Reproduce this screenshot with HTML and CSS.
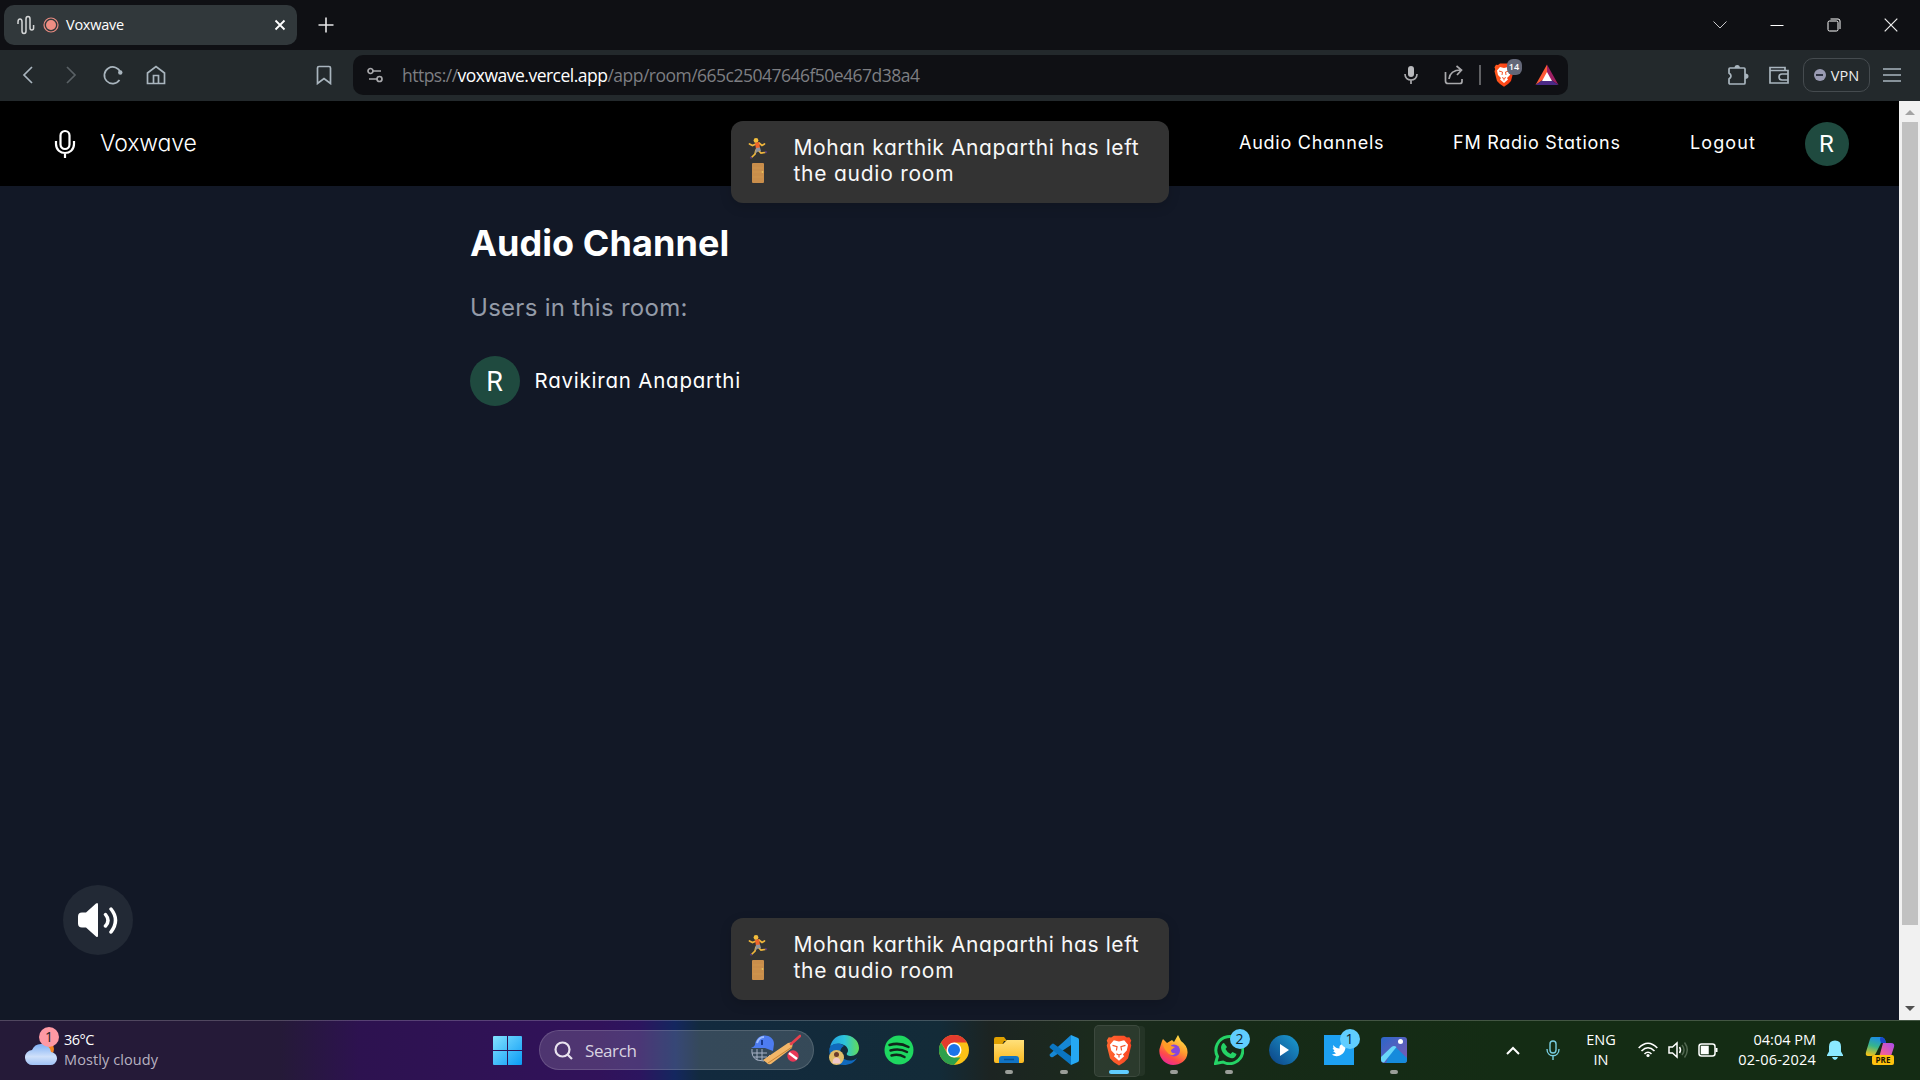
FILE: index.html
```html
<!DOCTYPE html>
<html lang="en">
<head>
<meta charset="utf-8">
<title>Voxwave</title>
<link rel="stylesheet" href="styles.css">
</head>
<body>
<div class="screen">
  <header class="tabs">
    <div class="tab">
      <svg class="wave" width="18" height="20" viewBox="0 0 18 20" fill="none"><path d="M1 9V7q0-3 2-3t2 3v9q0 2.500 2 2.500T9 16V4q0-2.500 2-2.500T13 4v9q0 2 1.800 2t1.800-2v-3" stroke="#d4d6d7" stroke-width="1.500"/></svg>
      <svg class="rec" width="16" height="16" viewBox="0 0 16 16"><circle cx="8" cy="8" r="7" fill="none" stroke="#e98b80" stroke-width="1.200"/><circle cx="8" cy="8" r="5" fill="#ee8e83"/></svg>
      <span class="ui tab-title">Voxwave</span>
      <svg class="tab-x" width="12" height="12" viewBox="0 0 12 12"><path d="M1.500 1.500l9 9m0-9l-9 9" stroke="#fff" stroke-width="1.800"/></svg>
    </div>
    <svg class="plus" width="16" height="16" viewBox="0 0 16 16"><path d="M8 .5v15M.5 8h15" stroke="#e6e6e8" stroke-width="1.600"/></svg>
    <div class="window-buttons">
      <svg width="14" height="14" viewBox="0 0 14 14" fill="none"><path d="M.5 3.500L7 10l6.500-6.500" stroke="#c8c8ca"/></svg>
      <svg width="14" height="14" viewBox="0 0 14 14"><path d="M.5 7.500h13" stroke="#fff"/></svg>
      <svg width="14" height="14" viewBox="0 0 14 14" fill="none" stroke="#fff"><rect x="1" y="3" width="10" height="10" rx="1.500"/><path d="M3.500 1H11q2 0 2 2v8"/></svg>
      <svg width="14" height="14" viewBox="0 0 14 14"><path d="M.7.700l12.600 12.600m0-12.600L.7 13.300" stroke="#eee" stroke-width="1.200"/></svg>
    </div>
  </header>

  <div class="toolbar">
    <div class="nav-icons">
      <svg width="20" height="20" viewBox="0 0 20 20"><path d="M14 2L6 10l8 8"/></svg>
      <svg class="dim" width="20" height="20" viewBox="0 0 20 20"><path d="M6 2l8 8-8 8"/></svg>
      <svg width="20" height="20" viewBox="0 0 20 20"><path d="M17.500 7.500A8.300 8.300 0 1 0 16.500 15"/><circle cx="17.300" cy="7.500" r="2.200" fill="#a9b5be" stroke="none"/></svg>
      <svg width="20" height="20" viewBox="0 0 20 20"><path d="M1.500 8L10 1.500 18.500 8v10.500h-17zM7.500 18v-7.500h5V18"/></svg>
    </div>
    <svg class="bookmark" width="16" height="20" viewBox="0 0 16 20"><path d="M1.500 3q0-1.500 1.500-1.500h10q1.500 0 1.500 1.500v15.500L8 13.500l-6.500 5z"/></svg>
    <div class="address">
      <svg class="tune" width="16" height="16" viewBox="0 0 16 16"><circle cx="3.500" cy="4" r="2.500"/><path d="M6 4h8M2 12h8"/><circle cx="12.500" cy="12" r="2.500"/></svg>
      <div class="ui url">https://<b>voxwave.vercel.app</b>/app/room/665c25047646f50e467d38a4</div>
      <svg class="a-mic" width="14" height="20" viewBox="0 0 14 20"><rect x="4" y="1" width="6" height="11" rx="3" fill="#b9babd" stroke="none"/><path d="M1 9c0 8 12 8 12 0M7 15v4"/></svg>
      <svg class="a-share" width="20" height="20" viewBox="0 0 20 20"><path d="M1.500 7v9q0 2.500 2.500 2.500h12q2 0 2-2V14M5 14Q6 5 17 5M12.500 1L17.500 5 13 10"/></svg>
      <i class="divider"></i>
      <div class="shield">
        <svg width="20" height="24" viewBox="0 0 20 24"><use href="#brave"/></svg>
        <span class="ui">14</span>
      </div>
      <svg class="bat" width="24" height="22" viewBox="0 0 24 22"><path d="M12 .5L.5 21 12 13z" fill="#ff5a36" stroke="none"/><path d="M12 .5L23.500 21 12 13z" fill="#9e1f63" stroke="none"/><path d="M.5 21h23L12 13z" fill="#4b2a86" stroke="none"/><path d="M12 8l5 9H7z" fill="#fff" stroke="none"/></svg>
    </div>
    <svg class="puzzle" width="22" height="22" viewBox="0 0 22 22"><path d="M3 4h14q1 0 1 1v14q0 1-1 1H3q-1 0-1-1v-4q4-3 0-6V5q0-1 1-1z"/><path d="M7.500 4q0-3 2.700-3t2.700 3zM18 9.500q3.500 0 3.500 2.700T18 15z" fill="#a9b5be" stroke="none"/></svg>
    <svg class="wallet" width="20" height="18" viewBox="0 0 20 18"><path d="M1 1.500h15v3H19v12.500H1zm0 3h15M19 8h-6q-3 0-3 3t3 3h6"/></svg>
    <div class="vpn ui"><i></i><span>VPN</span></div>
    <svg class="menu" width="18" height="14" viewBox="0 0 18 14"><path d="M0 1h18M0 7h18M0 13h18"/></svg>
  </div>

  <div class="view">
    <div class="page">
      <nav class="site-nav round">
        <svg width="22" height="30" viewBox="0 0 22 30" fill="none" stroke="#fff" stroke-width="2.200"><rect x="6.500" y="2" width="9" height="18" rx="4.500"/><path d="M2 12v3c0 12 18 12 18 0v-3M11 24v5"/></svg>
        <span class="brand">Voxwave</span>
        <span class="link link-a">Audio Channels</span>
        <span class="link link-b">FM Radio Stations</span>
        <span class="link link-c">Logout</span>
        <span class="avatar">R</span>
      </nav>
      <main>
        <h1>Audio Channel</h1>
        <h2>Users in this room:</h2>
        <div class="user"><span class="avatar big">R</span><span class="round name">Ravikiran Anaparthi</span></div>
      </main>
      <button class="speaker" aria-label="Mute">
        <svg width="42" height="36" viewBox="0 0 42 36"><path d="M5 10.500h4L19 1.500q2-1.500 2 1v31q0 2.500-2 1l-10-9H5q-4 0-4-4v-7q0-4 4-4z" fill="#fff"/><path d="M28.500 12.500q5 6 0 11.500M34 7q9 11 0 23" fill="none" stroke="#fff" stroke-width="3.500" stroke-linecap="round"/></svg>
      </button>
      <div class="toast toast-top">
        <div class="toast-icons"><svg width="20" height="22" viewBox="0 0 20 22"><use href="#runner"/></svg><svg width="12" height="20" viewBox="0 0 12 20"><use href="#door"/></svg></div>
        <p class="round">Mohan karthik Anaparthi has left<br><span class="l2">the audio room</span></p>
      </div>
      <div class="toast toast-bottom">
        <div class="toast-icons"><svg width="20" height="22" viewBox="0 0 20 22"><use href="#runner"/></svg><svg width="12" height="20" viewBox="0 0 12 20"><use href="#door"/></svg></div>
        <p class="round">Mohan karthik Anaparthi has left<br><span class="l2">the audio room</span></p>
      </div>
    </div>
    <div class="scrollbar">
      <svg width="10" height="5" viewBox="0 0 10 5"><path d="M0 5l5-5 5 5z" fill="#a3a3a3"/></svg>
      <i></i>
      <svg width="10" height="5" viewBox="0 0 10 5"><path d="M0 0h10L5 5z" fill="#505050"/></svg>
    </div>
  </div>

  <footer class="taskbar ui">
    <div class="weather">
      <div class="cloud">
        <svg width="32" height="36" viewBox="0 0 32 36"><circle cx="22" cy="19" r="7" fill="#f58220"/><path d="M8 35a7.500 7.500 0 0 1-1-15 10 10 0 0 1 19 2 6.500 6.500 0 0 1-1 13z" fill="url(#cloudg)"/></svg>
        <span class="badge pink">1</span>
      </div>
      <div class="weather-text"><span class="deg">36°C</span><span class="cond">Mostly cloudy</span></div>
    </div>
    <svg class="start" width="29" height="29" viewBox="0 0 29 29"><path d="M1 0h13v14H0V1q0-1 1-1zM15 0h13q1 0 1 1v13H15zM0 15h14v14H1q-1 0-1-1zM15 15h14v13q0 1-1 1H15z" fill="url(#wing)"/></svg>
    <div class="search">
      <svg width="19" height="19" viewBox="0 0 19 19" fill="none" stroke="#e8e2ee" stroke-width="2.200"><circle cx="8.500" cy="8.500" r="7"/><path d="M13.500 13.500l4.500 4.500"/></svg>
      <span>Search</span>
      <svg class="cricket" width="50" height="32" viewBox="0 0 50 32"><g fill="none" stroke="#a8b3c6"><path d="M1 15q-1 8 5 11l7 1 6-6M1 19h15M3 23h13M6 15v11M11 15v11"/></g><path d="M0 14q3-1 4-3C5-2 23-1 23 10l-1 7-8-3z" fill="#4d7cf0"/><path d="M6 9Q8 3 13 3" stroke="#9dbbff" stroke-width="2" fill="none"/><path d="M11 6v5" stroke="#183a8d" stroke-width="2"/><path d="M12 26L37 9l5-1-1 6-21 16q-3 1-4-1z" fill="#f2b668"/><path d="M17 29l24-16" stroke="#c98232"/><path d="M40 10l9-8" stroke="#e8404d" stroke-width="2.600" stroke-linecap="round"/><circle cx="42" cy="22" r="5.700" fill="#e63756"/><path d="M38 19l8 6" stroke="#fff" stroke-width="2.500"/></svg>
    </div>
    <div class="apps">
      <div class="app"><svg width="30" height="30" viewBox="0 0 30 30"><path d="M1 12C3 4 8 0 15 0c9 0 15 6 15 13 0 5-4 8-8 8-3 0-5-1-4-3 2-2 1-6-3-8C11 8 5 8 1 12z" fill="url(#edge1)"/><path d="M.5 13C4 7 13 8 15 11c-4 2-5 7-2 11 3 4 10 5 15 1-3 5-8 7-13 7C5 30-1 22 .5 13z" fill="#1069bd"/><circle cx="7.500" cy="22.500" r="7.500" fill="#e1bd6a"/><circle cx="7.500" cy="19.500" r="2.500" fill="#6b3b2c"/><path d="M3.500 28.500q0-6 4-6t4 6z" fill="#f0c7c8"/></svg></div>
      <div class="app"><svg width="30" height="30" viewBox="0 0 30 30"><circle cx="15" cy="15" r="14.500" fill="#1ed760"/><path d="M5.500 10q10-3 19 2M6.500 15.500q9-2.500 16.500 1.500M7.500 20.500q7-2 13 1.500" fill="none" stroke="#10251a" stroke-width="2.500" stroke-linecap="round"/></svg></div>
      <div class="app"><svg width="30" height="30" viewBox="0 0 30 30"><circle cx="15" cy="15" r="15" fill="#fbc116"/><path d="M2 7.500A15 15 0 0 1 28 7.500H15L9 18.500z" fill="#e33b2e"/><path d="M2 7.500L8.500 18.800 15 22.500h6.500L15 30A15 15 0 0 1 2 7.500z" fill="#2da04c"/><circle cx="15" cy="15" r="7.500" fill="#fff"/><circle cx="15" cy="15" r="6" fill="#1a73e8"/></svg></div>
      <div class="app running"><svg width="30" height="30" viewBox="0 0 30 30"><path d="M0 4q0-2 2-2h8l3 4h-3l-2 4H0z" fill="#dfa000"/><path d="M0 9h9l4-4h17v21q0 2-2 2H2q-2 0-2-2z" fill="url(#folder)"/><path d="M5 28v-4q0-3 3-3h14q3 0 3 3v4z" fill="#1174c5"/><path d="M10 24.500h10" stroke="#075194" stroke-width="1.500"/></svg></div>
      <div class="app running"><svg width="30" height="30" viewBox="0 0 30 30"><path d="M1 19L22 0v10L4 22q-2 1-3-1-1-1 0-2z" fill="#1687d4"/><path d="M1 11l2-2q1-1 2 0l18 13-1 8L1 13q-1-1 0-2z" fill="#0b75c1"/><path d="M22 0l7 3q1 .5 1 2v20q0 1.500-1 2l-7 3z" fill="#25a8f3"/></svg></div>
      <div class="app active"><svg width="26" height="31" viewBox="0 0 20 24"><use href="#brave"/></svg></div>
      <div class="app running"><svg width="29" height="30" viewBox="0 0 29 30"><path d="M3 6l1-2 4 4 5-3 2 2 4-7 3 6q7 5 6.500 12C28 26 21 30 14 30S-1 23 .5 14z" fill="url(#fox)"/><circle cx="15" cy="15.500" r="6" fill="#8746dc"/><path d="M3 6l5 3 5-1-1 3 4 1-4 3q0 4 5 3-5 5-9-1-4-4-5-11z" fill="#ff9b25"/></svg></div>
      <div class="app running"><svg width="30" height="30" viewBox="0 0 30 30"><path d="M1.500 28.500l2-7A13.500 13.500 0 1 1 9 27z" fill="none" stroke="#25d366" stroke-width="3"/><path d="M10 8l3 4-1.500 2q2 4 5 5l2-2 4 2q-1 5-6 4C11 21 7 17 7 12q1-4 3-4z" fill="#25d366"/></svg><span class="badge">2</span></div>
      <div class="app"><svg width="30" height="30" viewBox="0 0 30 30"><circle cx="15" cy="15" r="15" fill="url(#media)"/><path d="M11 9l9 6-9 6z" fill="#fff"/></svg></div>
      <div class="app"><svg width="30" height="30" viewBox="0 0 30 30"><path d="M0 0h30v30H0z" fill="#1da1f2"/><path d="M9 10q3 3.500 6.500 3.500c-.5-5 4-5 5-3.500l2-.5-1 2C22 19 13 24 8 19.500l4-1-3-2.500h1.500L8.500 13l1 .3z" fill="#fff"/></svg><span class="badge">1</span></div>
      <div class="app running"><svg width="26" height="26" viewBox="0 0 26 26"><rect width="26" height="26" rx="3" fill="url(#photo)"/><path d="M11 10.500q2-2 4 0L26 21v2q0 3-3 3H5z" fill="#168bdc"/><path d="M0 20L10.500 10q2.500-2 5 0L3 25.500q-3 0-3-3z" fill="#69d7fa"/><circle cx="19.500" cy="4.500" r="2.500" fill="#fff"/></svg></div>
    </div>
    <div class="tray">
      <svg class="caret" width="14" height="9" viewBox="0 0 14 9" fill="none"><path d="M1 8l6-6 6 6" stroke="#fff" stroke-width="2"/></svg>
      <svg class="t-mic" width="14" height="20" viewBox="0 0 14 20" fill="none" stroke="#78cde0" stroke-width="1.400"><rect x="4" y="1" width="6" height="12" rx="3"/><path d="M1 9c0 9 12 9 12 0M7 16v4"/></svg>
      <div class="lang"><span>ENG</span><span>IN</span></div>
      <svg class="wifi" width="20" height="16" viewBox="0 0 20 16" fill="none" stroke="#fff" stroke-width="1.600"><path d="M.7 6q9.300-9.500 18.600 0M3.500 9q6.500-6.500 13 0M6.500 12q3.500-3.500 7 0"/><circle cx="10" cy="13.500" r="1.600" fill="#fff" stroke="none"/></svg>
      <svg class="vol" width="20" height="18" viewBox="0 0 20 18" fill="none" stroke="#fff" stroke-width="1.500"><path d="M1 6h3.500L9 2v14l-4.500-4H1zM11.500 6q2 3 0 6"/><path d="M14 4q4 5 0 10M16.500 1.500q5.500 7.500 0 15" stroke="#50664f"/></svg>
      <svg class="batt" width="20" height="14" viewBox="0 0 20 14" fill="none" stroke="#fff" stroke-width="1.500"><rect x="1" y="1" width="16" height="12" rx="2.500"/><path d="M3.500 3.500H10v7H3.500z" fill="#fff"/><path d="M18.500 5v4" stroke-width="2"/></svg>
      <div class="clock"><span class="time">04:04 PM</span><span class="date">02-06-2024</span></div>
      <svg class="bell" width="16" height="20" viewBox="0 0 16 20" fill="#8be9ff"><path d="M8 .5q6 0 6 6v5l2 3.500v1H0v-1L2 11.500v-5q0-6 6-6zM5 17h6q-1 3-3 3t-3-3z"/></svg>
      <div class="copilot"><svg width="30" height="28" viewBox="0 0 30 28"><path d="M7 1h9q4 0 5 6h-5l-5 10q-1 3-5 3H3q-3 0-2-4L5 3q.5-2 2-2z" fill="url(#cop1)"/><path d="M16 1q4 0 5 6h-5q-2-5 0-6z" fill="#1746c9"/><path d="M18 7h8q4 0 3 4l-3 9q0 3-5 3H10q4-1 5-5z" fill="url(#cop2)"/></svg><span>PRE</span></div>
    </div>
  </footer>
</div>

<svg class="defs" width="0" height="0">
  <defs>
    <linearGradient id="braveg"><stop offset="0" stop-color="#ff5a1f"/><stop offset="1" stop-color="#fb3710"/></linearGradient>
    <linearGradient id="cloudg" x2="0" y2="1"><stop offset="0" stop-color="#7fb0f5"/><stop offset=".6" stop-color="#cfe0fa"/><stop offset="1" stop-color="#9fc2f5"/></linearGradient>
    <linearGradient id="wing" x2="1" y2="1"><stop offset="0" stop-color="#83e2ff"/><stop offset="1" stop-color="#0a9bf5"/></linearGradient>
    <linearGradient id="edge1"><stop offset="0" stop-color="#239fe0"/><stop offset=".5" stop-color="#2cc3dc"/><stop offset="1" stop-color="#62dc58"/></linearGradient>
    <linearGradient id="folder" x2="0" y2="1"><stop offset="0" stop-color="#ffe07a"/><stop offset="1" stop-color="#fbb91f"/></linearGradient>
    <linearGradient id="fox" x1=".8" y1="0" x2=".3" y2="1"><stop offset="0" stop-color="#ffe94a"/><stop offset=".45" stop-color="#ff9a2e"/><stop offset=".75" stop-color="#ff4a4a"/><stop offset="1" stop-color="#e9279b"/></linearGradient>
    <linearGradient id="media" x1="1" y1="0" x2="0" y2="1"><stop offset="0" stop-color="#1c9ed2"/><stop offset="1" stop-color="#0c3f82"/></linearGradient>
    <linearGradient id="photo" x2="1" y2="1"><stop offset="0" stop-color="#2b66c9"/><stop offset="1" stop-color="#7e5bb4"/></linearGradient>
    <linearGradient id="cop1" x1=".6" y1="0" x2=".3" y2="1"><stop offset="0" stop-color="#1a8bea"/><stop offset=".5" stop-color="#37b58a"/><stop offset="1" stop-color="#f2c318"/></linearGradient>
    <linearGradient id="cop2" x1="1" y1="0" x2="0" y2="1"><stop offset="0" stop-color="#a94cf0"/><stop offset=".6" stop-color="#ee5d9d"/><stop offset="1" stop-color="#f7835c"/></linearGradient>
    <symbol id="brave" viewBox="0 0 20 24"><path d="M6 .5h8L16 2l2-.3 1.500 2.500-.7 2 .7 2L17 18l-3 3-4 2.700L6 21l-3-3L.5 8.200l.7-2-.7-2L2 1.700 4 2z" fill="url(#braveg)"/><path d="M6 4l4 1 4-1 3 3.500-1 4.500-3 3 1 1.500-4 3.500-4-3.500L7 15l-3-3-1-4.500z" fill="#fff"/><path d="M5 8l3.500 1L8 12M15 8l-3.500 1 .5 3M8 14.500l2 1 2-1M10 15.500v2" fill="none" stroke="#f5471a" stroke-width=".9"/></symbol>
    <symbol id="runner" viewBox="0 0 20 22"><path d="M8 7L4.500 8.500 1.500 7M11 6l3 2.500L16.500 7M8 13l-1 4-3 3M10 13l3 3 4-.5" fill="none" stroke="#f0b63c" stroke-width="1.700" stroke-linecap="round"/><circle cx="8" cy="3.500" r="2.400" fill="#f2bd3d"/><path d="M7 6l4-1 1 6-4 1z" fill="#f0642b"/><path d="M8 11l4-.5 1 3.500-3 .5-3 2z" fill="#92949b"/><path d="M2 20.500l2 .5M17 14.500l2 1" stroke="#573b76" stroke-width="1.600"/></symbol>
    <symbol id="door" viewBox="0 0 12 20"><rect width="12" height="20" rx="1" fill="#c98e4b"/><path d="M1 5h10M1 9h10M1 14h10" stroke="#d0964f"/><circle cx="10.500" cy="9" r=".9" fill="#e8c25b"/></symbol>
  </defs>
</svg>
</body>
</html>
```
FILE: styles.css
```css
* { box-sizing: border-box; }
body { margin: 0; background: #121826; overflow: hidden; }
svg { display: block; flex: none; }
.defs { position: absolute; }
.screen { width: 1920px; height: 1080px; display: flex; flex-direction: column; }
.ui { font-family: "Open Sans", "Noto Sans", sans-serif; }
.round { font-family: Inter, sans-serif; font-feature-settings: "cv11"; }

.tabs { height: 50px; background: #0f1014; display: flex; align-items: center; padding-left: 4px; }
.tab { width: 293px; height: 40px; border-radius: 10px; background: #31383b; display: flex; align-items: center; padding: 0 11px 0 13px; color: #fff; }
.rec { margin-left: 8px; }
.tab-title { margin-left: 7px; font-size: 14.500px; line-height: 20px; letter-spacing: -.25px; }
.tab-x { margin-left: auto; }
.plus { margin-left: 21px; }
.window-buttons { margin-left: auto; display: flex; gap: 43px; padding-right: 22px; }

.toolbar { height: 51px; background: #23292c; display: flex; align-items: center; padding: 0 19px 1px 18px; }
.toolbar svg { fill: none; stroke: #a9b5be; stroke-width: 1.700; }
.nav-icons { display: flex; gap: 22.500px; }
.toolbar .dim { stroke: #5a6165; }
.bookmark { margin-left: 150px; }
.address { width: 1215px; height: 40px; margin-left: 21.500px; border-radius: 10px; background: #0f1014; display: flex; align-items: center; padding: 0 9.500px 0 14px; }
.toolbar .address svg { stroke: #a9a9ac; }
.url { margin-left: 19px; font-size: 17.500px; line-height: 24px; padding-bottom: 1px; color: #7d7e82; white-space: nowrap; letter-spacing: -.51px; font-weight: 400; }
.url b { color: #fff; font-weight: 400; }
.a-mic { margin-left: auto; }
.a-share { margin-left: 26px; }
.divider { width: 2px; height: 20px; background: #5f6063; margin-left: 14.500px; }
.shield { margin-left: 13px; position: relative; }
.shield span { position: absolute; left: 13px; top: -4px; width: 15px; height: 16px; border-radius: 6px; background: #636778; color: #fff; font-size: 9px; font-weight: 600; line-height: 16px; text-align: center; }
.toolbar .shield svg { stroke: none; }
.bat { margin-left: 21px; }
.puzzle { margin-left: 159px; }
.wallet { margin-left: 20px; }
.vpn { width: 67px; height: 34px; border: 1px solid #454b4f; border-radius: 10px; margin-left: 14px; display: flex; align-items: center; justify-content: center; gap: 5px; color: #eee; font-size: 14.500px; }
.vpn i { width: 12px; height: 12px; border-radius: 50%; background: linear-gradient(#303544, #303544) center / 7px 2px no-repeat #9a9bb3; }
.menu { margin-left: 13px; }

.view { height: 919px; display: flex; }
.page { width: 1899px; position: relative; background: #121826; }
.site-nav { height: 85px; background: #000; display: flex; align-items: center; padding-left: 54px; color: #fff; white-space: nowrap; }
.brand { width: 98px; margin-left: 24px; font-size: 23px; font-weight: 300; letter-spacing: -.1px; padding-bottom: 2px; }
.link { font-size: 18px; font-weight: 400; letter-spacing: .75px; padding-bottom: 2px; }
.link-a { margin-left: 1041px; width: 214px; }
.link-b { width: 237px; }
.link-c { width: 115px; letter-spacing: 1.1px; }
.avatar { width: 44px; height: 44px; border-radius: 50%; background: #1f4a3f; color: #fff; font: 400 24px/45px Roboto, sans-serif; text-align: center; padding-right: 1px; flex: none; }
.big { width: 50px; height: 50px; font-size: 27px; line-height: 52px; }
main { padding: 35px 0 0 470px; color: #fff; font-family: Inter, sans-serif; white-space: nowrap; }
h1 { margin: 0; font-size: 36px; line-height: 44px; font-weight: 700; letter-spacing: .08px; }
h2 { margin: 25px 0 0; font-size: 24px; line-height: 36px; font-weight: 400; letter-spacing: .28px; color: #949ba8; }
.user { display: flex; align-items: center; gap: 14.500px; margin-top: 30px; }
.name { font-size: 20.500px; letter-spacing: .78px; padding-bottom: 2px; }
.speaker { position: absolute; left: 63px; bottom: 65px; width: 70px; height: 70px; border: 0; border-radius: 50%; background: #222935; display: grid; place-items: center; padding: 0; }
.toast { position: absolute; left: 731px; width: 438px; height: 82px; border-radius: 12px; background: #333; color: #f8f8f8; display: flex; box-shadow: 0 4px 12px rgba(0,0,0,.15); padding: 14px 0 0 17px; }
.toast-top { top: 20px; }
.toast-bottom { bottom: 20px; }
.toast-icons { width: 45.500px; display: flex; flex-direction: column; gap: 4px; padding-top: 2px; }
.toast-icons svg + svg { margin-left: 4px; }
.toast p { margin: 0; font-size: 21px; line-height: 26px; letter-spacing: .6px; white-space: nowrap; }
.l2 { letter-spacing: .75px; }

.scrollbar { width: 21px; background: #f1f1f1; display: flex; flex-direction: column; align-items: center; padding: 9px 0; }
.scrollbar i { width: 16px; height: 803px; background: #c1c1c1; margin: 7px 0 81px; }

.taskbar { height: 60px; border-top: 1px solid rgba(255,255,255,.2); background: linear-gradient(90deg, #251a38 0, #251a38 280px, #2d1250 360px, #31125a 600px, #2c155f 640px, #14275f 675px, #122a3e 700px, #132b38 940px, #1c2422 990px, #1b2a1d 1090px, #162a17 1250px, #142c14 1500px, #142c14 100%); display: flex; align-items: center; padding-bottom: 1px; color: #fff; white-space: nowrap; }
.weather { display: flex; width: 493px; padding-left: 25px; }
.cloud { position: relative; width: 39px; }
.badge { position: absolute; width: 20px; height: 20px; border-radius: 50%; background: #60cdff; color: #10242c; font-size: 14px; line-height: 20px; text-align: center; left: 28px; top: -1px; }
.pink { background: #ff99a4; left: 14px; top: -3px; color: #222; }
.weather-text, .lang, .clock { display: flex; flex-direction: column; font-size: 14.500px; line-height: 20px; }
.deg { letter-spacing: -.5px; }
.cond { color: #b8b2c1; letter-spacing: .1px; }
.search { width: 275px; height: 40px; margin-left: 17px; border: 1px solid rgba(255,255,255,.14); border-radius: 20px; background: rgba(255,255,255,.15); display: flex; align-items: center; padding: 0 12px 0 14px; font-size: 17px; color: #d9d3e0; }
.search span { margin-left: 12px; letter-spacing: -.4px; }
.cricket { margin-left: auto; }
.apps { display: flex; margin-left: 2px; }
.app { position: relative; width: 55px; height: 50px; display: grid; place-items: center; }
.app .badge { left: 28.500px; top: 4px; }
.running::after, .active::after { content: ""; position: absolute; left: 24px; bottom: 1px; width: 8px; height: 4px; border-radius: 2px; background: #9a9e99; }
.active::after { left: 17.500px; width: 20px; background: #60cdff; }
.active::before { content: ""; position: absolute; left: 3px; top: 0; width: 44px; height: 50px; border-radius: 5px; background: rgba(255,255,255,.08); border: 1px solid rgba(255,255,255,.08); box-shadow: 6px 0 0 -1px rgba(255,255,255,.05); }
.tray { display: flex; align-items: center; margin-left: 85px; }
.t-mic { margin-left: 26px; }
.lang { width: 40px; margin-left: 21px; text-align: center; }
.wifi { margin-left: 17px; }
.vol { margin-left: 10px; }
.batt { margin-left: 10px; }
.clock { width: 90px; margin-left: 8px; text-align: right; }
.date { letter-spacing: .2px; }
.bell { margin-left: 11px; }
.copilot { position: relative; margin-left: 22px; }
.copilot span { position: absolute; left: 7px; bottom: -1px; width: 22px; height: 10px; border-radius: 2px; background: #ffc20e; color: #1c1600; font-size: 8px; font-weight: 700; line-height: 10px; text-align: center; }
```
